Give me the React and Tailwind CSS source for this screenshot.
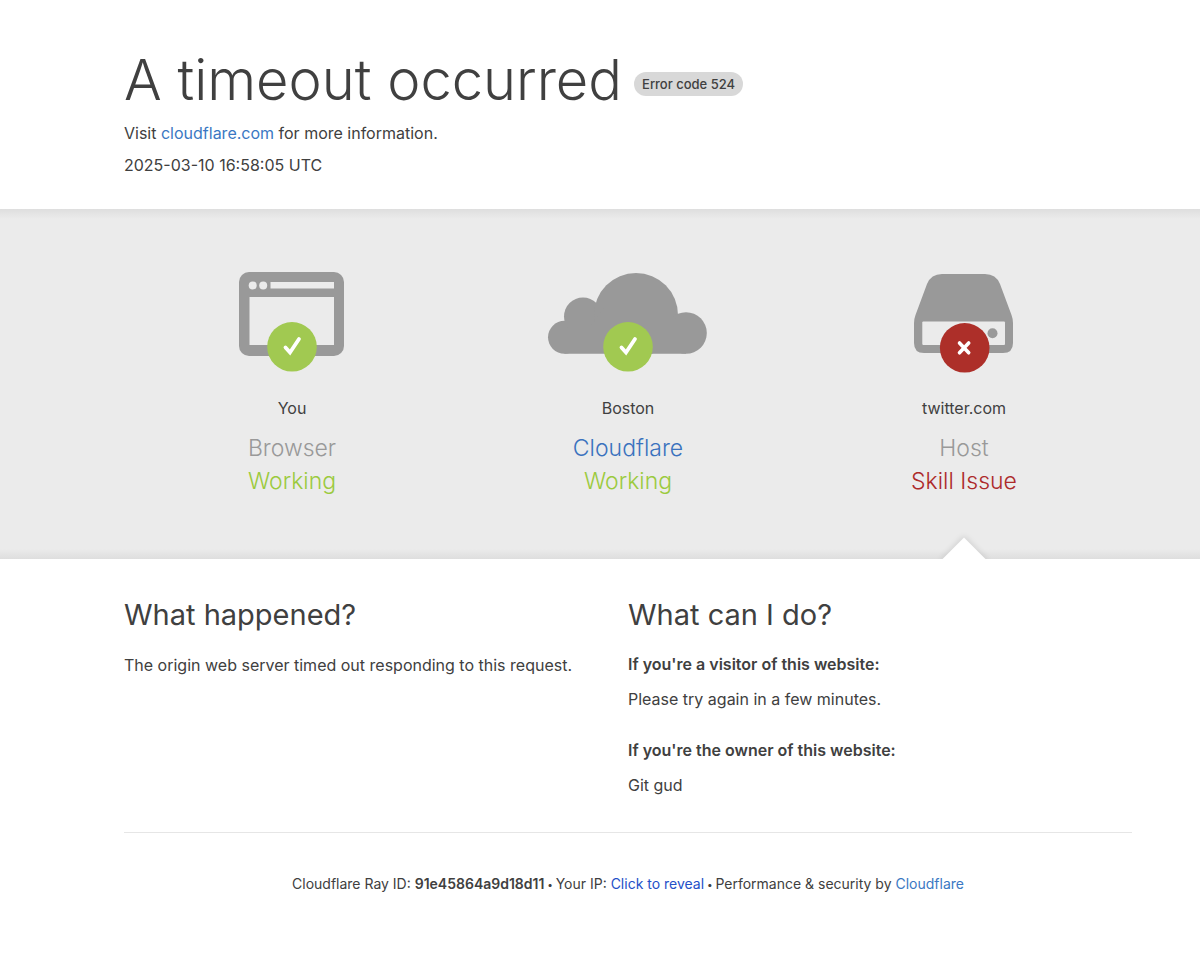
function Tick() {
  return (
    <>
      <circle cx="84" cy="78.8" r="24.8" fill="#a1c951" />
      <path d="M77.5 79.5 L82 84.5 L91 71" fill="none" stroke="#fff" strokeWidth="3.8" strokeLinecap="round" strokeLinejoin="miter" />
    </>
  );
}

function BrowserIcon() {
  return (
    <svg width="168" height="108" viewBox="0 0 168 108" aria-hidden="true">
      <rect x="31" y="4" width="105" height="84" rx="10" fill="#999" />
      <circle cx="44.7" cy="17.4" r="4" fill="#ebebeb" />
      <circle cx="55.2" cy="17.4" r="4" fill="#ebebeb" />
      <rect x="62.5" y="14" width="63.5" height="6.5" fill="#ebebeb" />
      <rect x="41.5" y="29" width="84.5" height="48" fill="#ebebeb" />
      <Tick />
    </svg>
  );
}

function CloudIcon() {
  return (
    <svg width="168" height="108" viewBox="0 0 168 108" aria-hidden="true">
      <g fill="#999">
        <circle cx="20.5" cy="69.3" r="16.5" />
        <circle cx="39" cy="48.5" r="19" />
        <circle cx="92" cy="47" r="42" />
        <circle cx="142" cy="65" r="20.8" />
        <path d="M20.5 85.8 V60 H45 L60 40 H120 L142 60 V85.8 Z" />
      </g>
      <Tick />
    </svg>
  );
}

function HostIcon() {
  return (
    <svg width="168" height="108" viewBox="0 0 168 108" aria-hidden="true">
      <path d="M62 6 H105 Q116 6 120 16 L131.5 47 Q133 51 133 55 V75 Q133 85 123 85 H44 Q34 85 34 75 V55 Q34 51 35.5 47 L47 16 Q51 6 62 6 Z" fill="#999" />
      <rect x="42.3" y="53.5" width="82.7" height="23.5" rx="1" fill="#ebebeb" />
      <circle cx="112.5" cy="65.3" r="5" fill="#999" />
      <circle cx="84.7" cy="79.8" r="24.8" fill="#ad2f29" />
      <path d="M79.5 75 L88.7 84.8 M88.7 75 L79.5 84.8" stroke="#fff" strokeWidth="3.6" strokeLinecap="round" />
    </svg>
  );
}

function Status({ icon, place, name, nameClass, state, stateClass, children }) {
  return (
    <div className="relative flex flex-col items-center pt-[59px] pb-[61px] text-center">
      {icon}
      <span className="mt-5 leading-6">{place}</span>
      <h3 className={`mt-3 text-[23px] leading-[33px] font-[330] ${nameClass}`}>{name}</h3>
      <span className={`text-[23px] leading-[33px] font-[330] ${stateClass}`}>{state}</span>
      {children}
    </div>
  );
}

export default function App() {
  return (
    <div className="min-h-screen bg-white font-['Inter','Liberation_Sans',sans-serif] text-base text-[#404040]">
      <header className="pt-11 pr-[68px] pb-8 pl-[124px]">
        <div className="flex flex-wrap items-center gap-x-3">
          <h1 className="text-[56px] leading-[72px] font-[330]">A timeout occurred</h1>
          <span className="mt-2 rounded-full bg-[#d8d8d8] px-2 text-[13px] leading-6 font-medium">Error code 524</span>
        </div>
        <p className="mt-[5px] leading-6">
          Visit <a href="https://www.cloudflare.com/" className="text-[#3a78c3]">cloudflare.com</a> for more information.
        </p>
        <p className="mt-2 leading-6">2025-03-10 16:58:05 UTC</p>
      </header>

      <section className="bg-[#ebebeb] bg-[linear-gradient(to_bottom,#dedede,#ebebeb_10px,#ebebeb_calc(100%-10px),#dedede)] pr-[68px] pl-[124px]">
        <div className="grid grid-cols-3">
          <Status icon={<BrowserIcon />} place="You" name="Browser" nameClass="text-[#999]" state="Working" stateClass="text-[#9bca3e]" />
          <Status
            icon={<CloudIcon />}
            place="Boston"
            name={<a href="https://www.cloudflare.com/">Cloudflare</a>}
            nameClass="text-[#3a72be]"
            state="Working"
            stateClass="text-[#9bca3e]"
          />
          <Status icon={<HostIcon />} place="twitter.com" name="Host" nameClass="text-[#999]" state="Skill Issue" stateClass="text-[#ad2a2a]">
            <svg className="absolute bottom-0 left-1/2 -translate-x-1/2" width="64" height="36" viewBox="0 0 64 36" aria-hidden="true">
              <defs>
                <filter id="pointer-shadow" x="-30%" y="-50%" width="160%" height="200%">
                  <feGaussianBlur stdDeviation="3" />
                </filter>
              </defs>
              <path d="M8 38 L32 13 L56 38 Z" fill="#000" opacity="0.12" filter="url(#pointer-shadow)" />
              <path d="M10.5 36 L32 14.5 L53.5 36 Z" fill="#fff" />
            </svg>
          </Status>
        </div>
      </section>

      <main className="grid grid-cols-2 pt-9 pr-[68px] pl-[124px]">
        <section>
          <h2 className="text-[29px] leading-10 font-normal">What happened?</h2>
          <p className="mt-[18px] leading-6">The origin web server timed out responding to this request.</p>
        </section>
        <section>
          <h2 className="text-[29px] leading-10 font-normal">What can I do?</h2>
          <h3 className="mt-[17px] leading-6 font-semibold">If you're a visitor of this website:</h3>
          <p className="mt-[11px] leading-6">Please try again in a few minutes.</p>
          <h3 className="mt-[27px] leading-6 font-semibold">If you're the owner of this website:</h3>
          <p className="mt-[11px] leading-6">Git gud</p>
        </section>
      </main>

      <footer className="mt-[35px] pr-[68px] pb-[73px] pl-[124px]">
        <p className="border-t border-[#e6e6e6] pt-[41px] text-center text-sm leading-5">
          Cloudflare Ray ID: <strong className="font-semibold">91e45864a9d18d11</strong>
          <span className="align-[1px] text-[10px] leading-none"> • </span>Your IP:{" "}
          <button type="button" className="cursor-pointer text-[#2450c8]">Click to reveal</button>
          <span className="align-[1px] text-[10px] leading-none"> • </span>Performance &amp; security by{" "}
          <a href="https://www.cloudflare.com/" className="text-[#3a78c3]">Cloudflare</a>
        </p>
      </footer>
    </div>
  );
}
